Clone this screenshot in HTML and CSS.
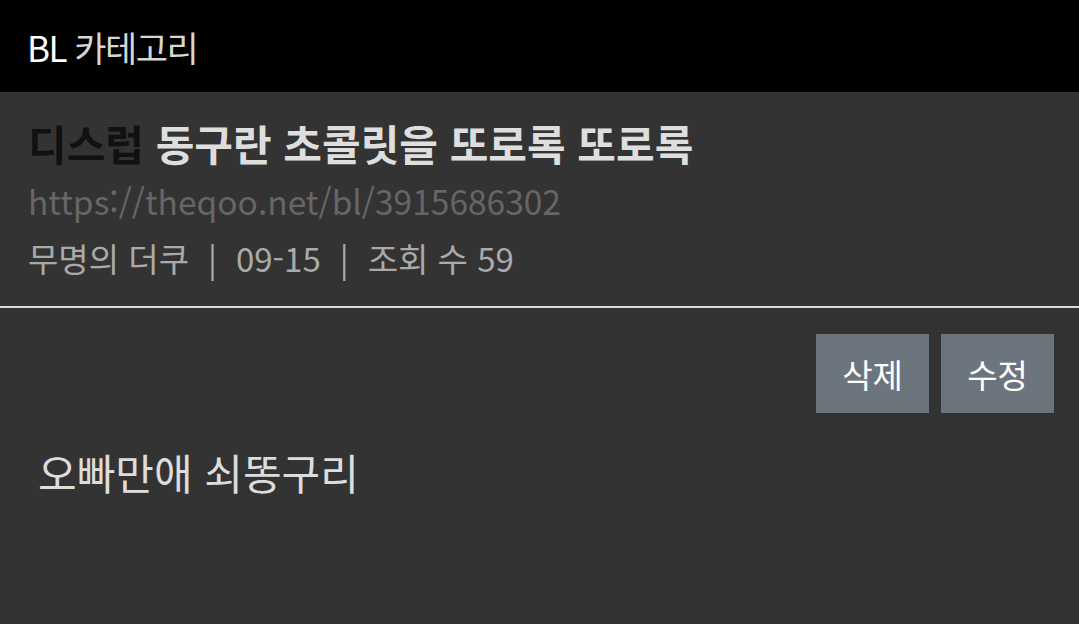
FILE: index.html
```html
<!DOCTYPE html>
<html lang="ko">

<head>
    <meta charset="UTF-8">
    <meta name="viewport" content="width=device-width, initial-scale=1.0">
    <title>BL 카테고리</title>
    <link rel="stylesheet" href="styles.css">
</head>

<body>
    <div class="topbar">
        <span class="cat-code">BL</span>&nbsp;<span class="cat-name">카테고리</span>
    </div>
    <div class="post-head">
        <h1 class="post-title"><span class="tag">디스럽</span> 동구란 초콜릿을 또로록 또로록</h1>
        <div class="post-url">https://theqoo.net/bl/3915686302</div>
        <div class="post-meta">
            <span>무명의 더쿠</span><span class="sep">|</span><span>09-15</span><span class="sep">|</span><span>조회 수 59</span>
        </div>
    </div>
    <div class="actions">
        <button class="btn">삭제</button>
        <button class="btn">수정</button>
    </div>
    <div class="post-body">오빠만애 쇠똥구리</div>
</body>
</html>
```

FILE: styles.css
```css
body {
    font-family: "Noto Sans CJK KR", "Noto Sans", sans-serif;
    margin: 0;
    padding: 0;
    background-color: #333333;
    color: #dddddd;
}
.topbar {
    height: 92px;
    background: #000;
    display: flex;
    align-items: center;
    padding-left: 27px;
    font-size: 35px;
    letter-spacing: -1.5px;
}
.cat-code {
    color: #fff;
}
.cat-name {
    color: #d6d6d6;
}
.post-head {
    padding: 22px 28px 20px;
    border-bottom: 2px solid #dddddd;
}
.post-title {
    margin: 0;
    font-size: 42px;
    font-weight: bold;
    line-height: 58px;
    color: #dedede;
}
.post-title .tag {
    color: #111;
}
.post-url {
    font-size: 33.5px;
    line-height: 58px;
    color: #666666;
}
.post-meta {
    font-size: 33px;
    line-height: 56px;
    color: #aaaaaa;
}
.post-meta .sep {
    margin: 0 19px;
}
.actions {
    display: flex;
    justify-content: flex-end;
    gap: 12px;
    padding: 26px 25px 0;
}
.btn {
    width: 113px;
    height: 79px;
    background: #6c757d;
    color: #fff;
    border: none;
    font-family: inherit;
    font-size: 33px;
    padding: 0;
}
.post-body {
    padding: 30px 38px;
    font-size: 42px;
    line-height: 58px;
    color: #dddddd;
}
```
